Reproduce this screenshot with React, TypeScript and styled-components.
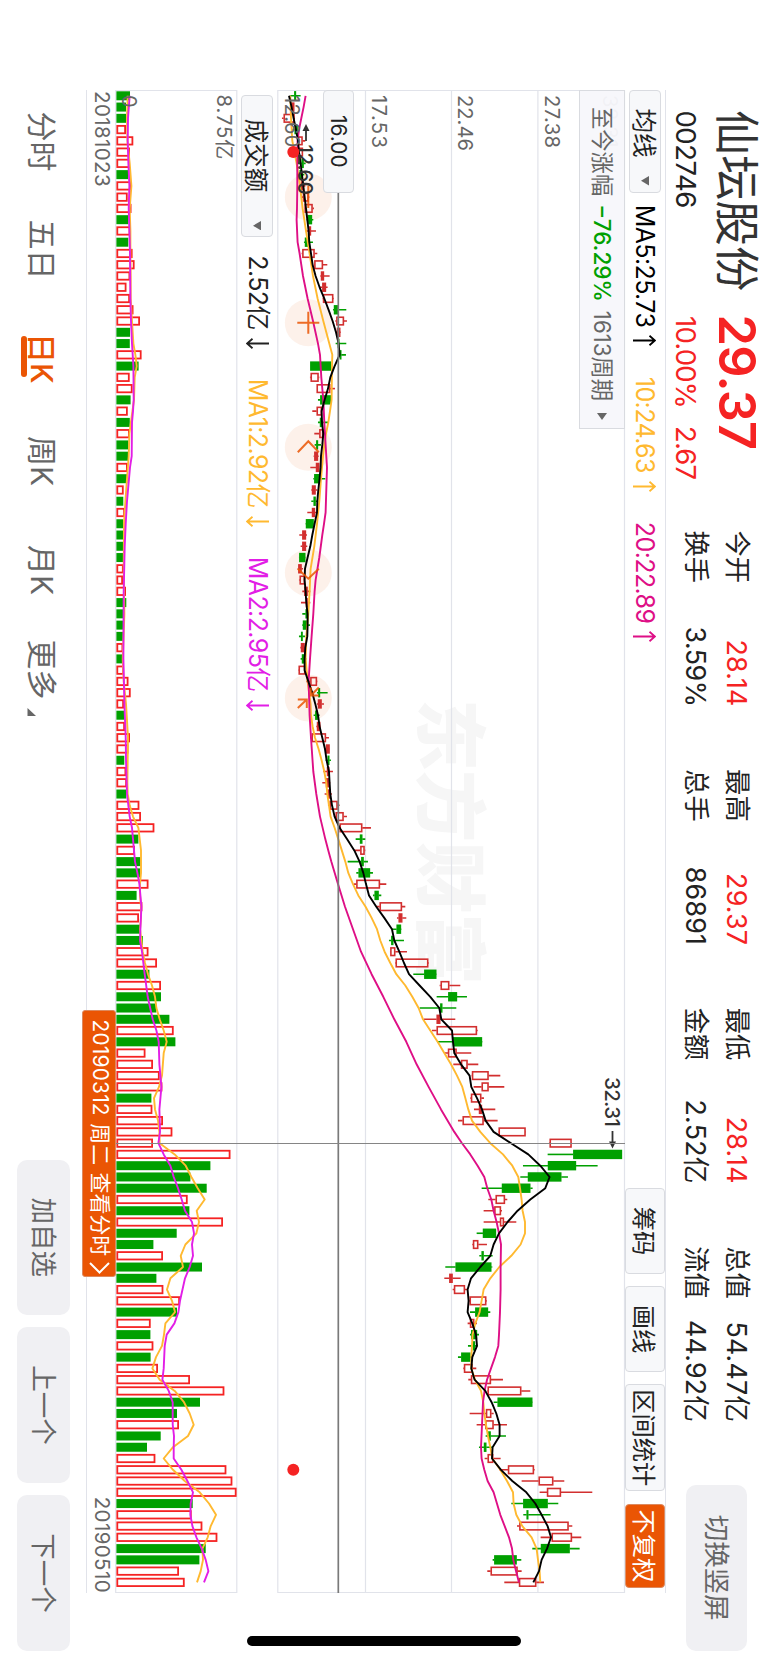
import React from "react";
import styled, { createGlobalStyle, css } from "styled-components";

const RED = "#f52323";
const GREEN = "#00a000";
const ORANGE = "#ea5504";
const YELLOW = "#ffb930";
const PINK = "#de0f86";
const MAGENTA = "#e21ee6";
const GREY = "#666";
const LINE = "#e1e3ea";
const FONT = `Inter, "Noto Sans CJK SC", sans-serif`;

const GlobalStyle = createGlobalStyle`
  html, body { margin: 0; padding: 0; background: #fff; }
  * { box-sizing: border-box; }
`;

/* ---------- data ---------- */

/* Chart levels are stored at three units per pixel. */
const UNIT = 3;
const STEP = 11.262;
const FIRST = 5.8;

type Candle = [string, number, number, number, number];

/* colour, low, body bottom, body top, high */
const candles: Candle[] = [
  ["g", 870, 882, 887, 901], ["r", 872, 872, 882, 882], ["r", 845, 850, 883, 884], ["g", 876, 883, 892, 896],
  ["r", 890, 893, 907, 915], ["r", 882, 884, 908, 908], ["g", 893, 904, 910, 916], ["g", 890, 898, 905, 912],
  ["r", 898, 902, 910, 915], ["r", 905, 908, 925, 927], ["r", 912, 913, 937, 941], ["g", 919, 922, 935, 939],
  ["r", 916, 924, 932, 947], ["g", 911, 914, 925, 938], ["r", 904, 906, 943, 951], ["r", 940, 942, 968, 981],
  ["r", 960, 962, 971, 988], ["r", 958, 966, 977, 982], ["r", 967, 968, 999, 1001], ["g", 998, 1001, 1014, 1038],
  ["r", 1005, 1008, 1031, 1040], ["r", 1007, 1010, 1020, 1022], ["g", 1006, 1014, 1017, 1038], ["g", 1013, 1019, 1023, 1037],
  ["g", 930, 930, 992, 992], ["r", 929, 931, 955, 957], ["r", 949, 949, 990, 1004], ["g", 953, 960, 992, 993],
  ["r", 936, 949, 965, 966], ["g", 953, 959, 965, 983], ["r", 942, 957, 969, 972], ["g", 943, 948, 953, 962],
  ["r", 940, 942, 953, 955], ["r", 930, 947, 957, 958], ["g", 939, 942, 957, 975], ["r", 933, 935, 946, 951],
  ["g", 933, 940, 946, 951], ["r", 921, 935, 944, 950], ["g", 916, 917, 940, 941], ["r", 897, 906, 917, 920],
  ["r", 901, 906, 917, 921], ["g", 896, 897, 915, 916], ["r", 892, 894, 904, 908], ["r", 896, 898, 914, 914],
  ["r", 906, 912, 922, 930], ["r", 902, 917, 922, 930], ["g", 906, 916, 922, 926], ["g", 906, 908, 920, 929],
  ["g", 896, 903, 907, 914], ["r", 900, 902, 913, 915], ["g", 901, 905, 914, 918], ["r", 894, 895, 915, 915],
  ["r", 918, 930, 950, 951], ["g", 950, 954, 959, 982], ["r", 950, 953, 964, 971], ["g", 940, 945, 952, 958],
  ["r", 948, 950, 960, 962], ["r", 930, 934, 977, 986], ["r", 972, 977, 988, 989], ["g", 976, 982, 987, 992],
  ["r", 969, 980, 987, 998], ["r", 966, 977, 988, 990], ["r", 973, 982, 991, 995], ["r", 983, 988, 1012, 1018],
  ["r", 1003, 1006, 1030, 1040], ["r", 1017, 1018, 1086, 1112], ["g", 1066, 1079, 1086, 1095], ["r", 1062, 1080, 1093, 1095],
  ["g", 1042, 1083, 1090, 1103], ["g", 1068, 1075, 1109, 1118], ["r", 1060, 1068, 1139, 1158], ["g", 1118, 1123, 1135, 1143],
  ["r", 1128, 1138, 1205, 1215], ["r", 1190, 1195, 1206, 1218], ["g", 1174, 1189, 1202, 1203], ["g", 1166, 1173, 1179, 1211],
  ["r", 1169, 1170, 1185, 1220], ["r", 1184, 1186, 1284, 1286], ["g", 1239, 1272, 1308, 1309], ["r", 1318, 1321, 1347, 1380],
  ["g", 1309, 1344, 1370, 1400], ["g", 1258, 1320, 1326, 1368], ["r", 1271, 1309, 1320, 1365], ["r", 1295, 1309, 1430, 1432],
  ["g", 1310, 1358, 1445, 1446], ["r", 1334, 1343, 1369, 1413], ["r", 1359, 1382, 1402, 1434], ["r", 1414, 1415, 1465, 1500],
  ["r", 1420, 1444, 1465, 1512], ["r", 1410, 1412, 1443, 1451], ["r", 1421, 1436, 1445, 1485], ["r", 1373, 1387, 1450, 1492],
  ["r", 1494, 1495, 1576, 1577], ["r", 1646, 1648, 1714, 1715], ["g", 1642, 1719, 1865, 1865], ["g", 1568, 1643, 1727, 1792],
  ["g", 1560, 1583, 1683, 1703], ["g", 1444, 1505, 1590, 1597], ["r", 1464, 1486, 1514, 1521], ["r", 1450, 1482, 1502, 1505],
  ["r", 1450, 1499, 1511, 1548], ["g", 1429, 1448, 1487, 1487], ["r", 1416, 1418, 1434, 1460], ["g", 1437, 1444, 1450, 1477],
  ["g", 1335, 1366, 1473, 1476], ["r", 1332, 1347, 1357, 1381], ["r", 1357, 1361, 1394, 1400], ["r", 1405, 1408, 1458, 1460],
  ["g", 1409, 1425, 1463, 1470], ["r", 1402, 1409, 1422, 1430], ["g", 1409, 1413, 1430, 1436], ["g", 1403, 1418, 1424, 1431],
  ["g", 1373, 1383, 1410, 1412], ["r", 1389, 1391, 1417, 1428], ["r", 1404, 1412, 1472, 1508], ["r", 1460, 1462, 1563, 1590],
  ["g", 1480, 1492, 1596, 1597], ["r", 1408, 1457, 1473, 1480], ["r", 1429, 1455, 1480, 1520], ["g", 1456, 1464, 1471, 1517],
  ["g", 1436, 1451, 1458, 1475], ["r", 1453, 1462, 1479, 1501], ["r", 1497, 1523, 1601, 1603], ["r", 1564, 1615, 1659, 1692],
  ["r", 1618, 1640, 1682, 1776], ["g", 1533, 1569, 1642, 1674], ["g", 1569, 1579, 1584, 1651], ["r", 1550, 1557, 1705, 1716],
  ["r", 1621, 1654, 1715, 1743], ["g", 1596, 1622, 1708, 1738], ["g", 1477, 1482, 1549, 1563], ["r", 1461, 1471, 1552, 1564],
  ["r", 1512, 1556, 1608, 1631],
];

const volumeColours =
  "gggrrrrgrrrgrgrrrrrrrggrgrrgrgrggrgrgrggggrrrggggrgrrrrgrrrgrrgrrrgrggrgrrggrrgrgggrgrrrrgrrrrrgggrgrggrggrrgrgrgrrrggrggrrrrgrrrggrr";

const volumes = [
  14, 10, 10, 10, 17.3, 14, 14, 12, 15.5, 11.7, 15.5, 12.3, 14.5, 12.3, 16.6, 18.6, 14.3, 10.5, 14, 17.5, 24, 14, 13.8,
  25.6, 22.6, 13.7, 16.6, 14.6, 11.8, 13.8, 13.8, 12.5, 12.5, 11.8, 11.3, 7.7, 7.3, 9, 7.3, 7, 7.3, 7.3, 7.7, 7, 10,
  10.3, 8.3, 7.7, 7.3, 7.3, 6.7, 8, 12.5, 14.7, 8, 8.3, 9, 14, 12.4, 8.3, 10.3, 11, 10.3, 23.4, 25, 38.4, 22.4, 19,
  24.7, 24.4, 32.5, 20.6, 26.4, 23, 24, 26.8, 32.5, 41, 33.4, 45, 45, 40.4, 53.4, 57.7, 59.4, 29.5, 37, 43.7, 46.4,
  35.4, 36.4, 47, 56.4, 37, 114.5, 94.4, 74.4, 90.7, 71.7, 73.4, 107, 60.7, 37.4, 47, 86, 40.4, 47.4, 64, 61, 34.7,
  34.4, 37.4, 34.6, 42, 74, 108.4, 84, 61, 63, 44.7, 31, 39.4, 110.4, 116.4, 120.6, 76.7, 75.7, 86.4, 101.4, 89.7,
  83.4, 63, 68.7,
];

/* flat list of (bar index, level) pairs */
const ma5 = [
  0, 866, 1, 874, 2, 880, 3, 887, 4, 893, 5, 896, 6, 901, 8, 909, 10, 917, 12, 925, 13, 927, 14, 932, 15, 937, 16, 946,
  17, 958, 18, 972, 19, 985, 20, 997, 21, 1007, 22, 1015, 23, 1018, 24, 1003, 25, 990, 26, 983, 27, 973, 28, 964, 29,
  965, 30, 969, 31, 966, 32, 962, 33, 961, 34, 958, 35, 954, 36, 951, 37, 950, 38, 943, 39, 936, 40, 930, 41, 922, 42,
  914, 43, 913, 44, 916, 45, 918, 46, 922, 47, 922, 48, 921, 49, 915, 50, 913, 51, 913, 52, 924, 53, 936, 54, 945, 55,
  953, 56, 958, 57, 966, 58, 974, 59, 979, 60, 986, 61, 988, 62, 990, 63, 995, 64, 1003, 65, 1018, 66, 1040, 67, 1062,
  68, 1078, 69, 1089, 70, 1097, 71, 1106, 72, 1128, 73, 1152, 74, 1175, 75, 1182, 76, 1197, 77, 1211, 78, 1226, 79,
  1258, 80, 1290, 81, 1317, 82, 1323, 83, 1355, 84, 1358, 85, 1362, 86, 1382, 87, 1408, 88, 1413, 89, 1430, 90, 1445,
  91, 1456, 92, 1480, 93, 1532, 94, 1584, 95, 1620, 96, 1648, 97, 1635, 98, 1590, 99, 1552, 100, 1522, 101, 1496, 102,
  1480, 103, 1470, 104, 1440, 105, 1412, 106, 1402, 107, 1405, 108, 1402, 109, 1416, 110, 1427, 111, 1430, 112, 1416,
  113, 1413, 114, 1423, 115, 1455, 116, 1474, 117, 1488, 118, 1498, 119, 1498, 120, 1477, 121, 1475, 122, 1502, 123,
  1536, 124, 1578, 125, 1605, 126, 1624, 127, 1642, 128, 1652, 129, 1640, 130, 1624, 131, 1616, 132, 1599,
];

const ma10 = [
  0, 870, 2, 872, 4, 876, 6, 889, 8, 899, 10, 907, 12, 917, 14, 928, 16, 938, 18, 952, 20, 969, 22, 987, 23, 996, 24,
  995, 27, 994, 28, 989, 29, 984, 30, 977, 31, 972, 32, 968, 34, 962, 36, 957, 38, 950, 40, 942, 42, 931, 44, 928, 46,
  924, 48, 918, 50, 916, 52, 922, 54, 931, 55, 932, 56, 937, 57, 944, 58, 955, 59, 964, 60, 972, 61, 978, 62, 981, 63,
  986, 64, 991, 65, 1003, 66, 1014, 68, 1035, 69, 1044, 70, 1058, 71, 1074, 72, 1096, 73, 1114, 74, 1130, 75, 1140, 76,
  1153, 77, 1170, 78, 1188, 79, 1215, 80, 1236, 81, 1255, 82, 1268, 83, 1290, 84, 1312, 85, 1332, 86, 1352, 87, 1370,
  88, 1386, 89, 1395, 90, 1404, 91, 1415, 92, 1440, 93, 1470, 94, 1508, 95, 1536, 96, 1554, 97, 1559, 98, 1564, 99,
  1567, 100, 1574, 101, 1574, 102, 1561, 103, 1533, 104, 1497, 105, 1470, 106, 1450, 107, 1444, 108, 1438, 109, 1425,
  110, 1417, 111, 1415, 112, 1413, 113, 1413, 114, 1424, 115, 1442, 116, 1449, 117, 1452, 118, 1457, 119, 1463, 120,
  1470, 121, 1476, 122, 1500, 123, 1520, 124, 1538, 125, 1540, 126, 1548, 127, 1566, 128, 1594, 129, 1609, 130, 1613,
  131, 1618, 132, 1620,
];

const ma20 = [
  0, 916, 1, 910, 2, 903, 3, 896, 4, 892, 6, 891, 8, 891, 10, 890, 11, 889, 13, 892, 14, 898, 16, 908, 18, 922, 20,
  938, 22, 953, 23, 959, 25, 963, 27, 969, 29, 972, 30, 974, 32, 978, 33, 980, 35, 978, 37, 976, 38, 971, 39, 966, 41,
  957, 43, 946, 44, 943, 46, 939, 48, 934, 50, 929, 52, 925, 54, 927, 55, 928, 56, 930, 57, 932, 60, 939, 62, 948, 64,
  959, 66, 975, 67, 984, 68, 993, 70, 1013, 72, 1034, 74, 1058, 76, 1082, 78, 1114, 80, 1149, 82, 1182, 83, 1200, 84,
  1218, 86, 1249, 88, 1285, 90, 1322, 92, 1362, 93, 1385, 94, 1410, 95, 1432, 96, 1452, 97, 1461, 98, 1473, 99, 1480,
  100, 1489, 101, 1496, 102, 1502, 104, 1501, 106, 1501, 108, 1499, 110, 1496, 111, 1494, 112, 1484, 113, 1472, 114,
  1460, 115, 1453, 116, 1448, 118, 1445, 120, 1442, 121, 1444, 122, 1452, 123, 1462, 124, 1480, 126, 1500, 128, 1526,
  129, 1535, 130, 1539, 131, 1547, 132, 1556,
];

const volMa1 = [
  0, 384, 2, 382, 4, 383, 6, 390, 8, 395, 10, 390, 12, 392, 14, 392, 16, 393, 18, 393, 20, 397, 22, 401, 23, 407, 24,
  411, 25, 405, 27, 403, 28, 398, 30, 389, 32, 387, 34, 382, 36, 377, 38, 373, 42, 372, 46, 374, 50, 369, 52, 372, 54,
  379, 55, 381, 57, 385, 59, 384, 61, 383, 62, 384, 63, 390, 64, 400, 65, 416, 66, 420, 67, 424, 69, 424, 70, 421, 71,
  421, 72, 424, 73, 424, 74, 421, 76, 429, 77, 436, 78, 445, 79, 457, 80, 466, 81, 470, 82, 480, 83, 492, 84, 501, 85,
  492, 87, 487, 88, 478, 89, 463, 90, 466, 91, 475, 92, 479, 93, 480, 94, 525, 95, 558, 96, 575, 97, 594, 98, 615, 99,
  591, 100, 598, 101, 590, 102, 557, 103, 543, 104, 550, 105, 512, 106, 502, 107, 517, 108, 526, 109, 497, 110, 493,
  111, 487, 112, 469, 113, 458, 114, 480, 115, 525, 116, 553, 117, 570, 118, 582, 119, 565, 120, 520, 121, 492, 122,
  520, 123, 555, 124, 600, 125, 628, 126, 649, 127, 633, 128, 624, 129, 608, 130, 610, 131, 603, 132, 592,
];

const volMa2 = [
  0, 390, 2, 385, 4, 384, 6, 386, 8, 389, 10, 387, 12, 389, 14, 391, 18, 392, 20, 394, 22, 397, 24, 401, 27, 402, 28,
  400, 29, 397, 32, 396, 33, 391, 34, 388, 36, 382, 38, 378, 40, 375, 44, 372, 50, 371, 54, 374, 57, 378, 59, 379, 61,
  381, 62, 382, 64, 390, 65, 397, 66, 400, 68, 406, 69, 413, 70, 419, 72, 425, 74, 422, 75, 421, 76, 427, 78, 435, 80,
  444, 82, 459, 83, 470, 84, 477, 86, 479, 88, 485, 90, 479, 92, 481, 93, 476, 94, 492, 95, 512, 96, 522, 97, 535, 98,
  546, 99, 556, 100, 577, 101, 583, 102, 577, 103, 580, 104, 570, 105, 556, 107, 541, 108, 536, 109, 524, 110, 501,
  111, 495, 113, 492, 114, 488, 115, 507, 116, 519, 118, 519, 119, 523, 120, 522, 121, 522, 122, 545, 123, 563, 124,
  580, 125, 573, 126, 572, 127, 578, 128, 590, 129, 606, 130, 618, 131, 626, 132, 613,
];

const quotes = [
  { a: "今开", av: "28.14", b: "换手", bv: "3.59%", red: true },
  { a: "最高", av: "29.37", b: "总手", bv: "86891", red: true },
  { a: "最低", av: "28.14", b: "金额", bv: "2.52亿", red: true },
  { a: "总值", av: "54.47亿", b: "流值", bv: "44.92亿", red: false },
];

/* ---------- layout ---------- */

const Screen = styled.div`
  width: 768px;
  height: 1663px;
  overflow: hidden;
  background: #fff;
`;

/* The phone is held sideways: the landscape page is turned a quarter. */
const Landscape = styled.div`
  position: relative;
  width: 1663px;
  height: 768px;
  display: flex;
  flex-direction: column;
  transform-origin: 0 0;
  transform: translateX(768px) rotate(90deg);
  font-family: ${FONT};
  font-size: 25px;
  line-height: 1;
  color: #222;
  white-space: nowrap;
`;

const Header = styled.header`
  display: flex;
  flex: none;
  height: 102px;
  padding: 0 12.3px 0 110px;
`;

const Identity = styled.div`
  display: grid;
  grid-template-columns: 206px auto;
  grid-template-rows: 62px 40.5px;
  align-items: center;
  width: 420.5px;
`;

const StockName = styled.h1`
  margin: 0;
  padding-top: 1px;
  font-size: 45.3px;
  font-weight: 400;
  color: #333;
`;

const LastPrice = styled.span`
  margin-left: -1.5px;
  font-size: 50.5px;
  font-weight: 640;
  letter-spacing: -0.7px;
  color: ${RED};
`;

const Code = styled.span`
  padding-left: 0.5px;
  font-size: 27.5px;
  letter-spacing: -0.5px;
`;

const Change = styled.span`
  display: flex;
  gap: 18px;
  font-size: 27.5px;
  letter-spacing: -0.8px;
  color: ${RED};
`;

const Quotes = styled.dl`
  display: flex;
  gap: 62.6px;
  margin: 10.5px 0 0;
`;

const QuoteColumn = styled.div`
  width: 176px;
`;

const QuoteRow = styled.div`
  display: flex;
  align-items: center;
  justify-content: space-between;
  height: 41px;
`;

const QuoteLabel = styled.dt`
  padding-top: 1px;
  font-size: 26.3px;
`;

const QuoteValue = styled.dd<{ $red?: boolean; $tight?: boolean }>`
  margin: 0;
  font-size: 26.8px;
  letter-spacing: ${(p) => (p.$tight ? -0.5 : 0.2)}px;
  color: ${(p) => (p.$red ? RED : "#222")};
`;

const SoftButton = styled.button<{ $w: number; $h: number }>`
  display: flex;
  align-items: center;
  justify-content: center;
  width: ${(p) => p.$w}px;
  height: ${(p) => p.$h}px;
  padding: 0;
  border: 0;
  border-radius: 10px;
  background: #f0f0f3;
  font-family: ${FONT};
  font-size: 26.5px;
  line-height: 1;
  color: ${GREY};
`;

const SwitchSlot = styled.div`
  margin: 21px 0 0 auto;
`;

const Body = styled.main`
  position: relative;
  width: 1503px;
  margin-left: 90px;
  flex: none;
`;

const MaBar = styled.div`
  display: flex;
  align-items: center;
  height: 41.3px;
  border-top: 1px solid ${LINE};
`;

const VolumeBar = styled.div`
  display: flex;
  align-items: center;
  height: 40.2px;
  padding-left: 5px;
`;

const chip = css`
  display: flex;
  align-items: center;
  border: 1px solid #d9dbe0;
  border-radius: 4px;
  background: #f7f8fa;
`;

const Select = styled.div<{ $w: number }>`
  ${chip}
  justify-content: space-between;
  width: ${(p) => p.$w}px;
  height: 32px;
  padding: 3px 6px 0 ${(p) => (p.$w > 110 ? 22.5 : 17.5)}px;
  font-size: 24.6px;
  svg { margin-top: -3px; }
`;

const Reading = styled.span<{ $c: string; $ml: number }>`
  display: flex;
  align-items: center;
  gap: 8px;
  margin-left: ${(p) => p.$ml}px;
  letter-spacing: -0.6px;
  color: ${(p) => p.$c};
`;

const Tools = styled.div`
  display: flex;
  gap: 12.7px;
  margin-left: auto;
  margin-right: 5px;
`;

const Tool = styled.button<{ $w: number; $on?: boolean }>`
  ${chip}
  justify-content: center;
  width: ${(p) => p.$w}px;
  height: 40px;
  padding: 3px 0 0;
  font-family: ${FONT};
  font-size: 24.3px;
  line-height: 1;
  color: #222;
  ${(p) => p.$on && css`background: ${ORANGE}; border-color: #dd8a5f; color: #fff;`}
`;

const ChartBox = styled.section<{ $h: number }>`
  position: relative;
  height: ${(p) => p.$h}px;
  svg { display: block; overflow: visible; }
`;

const GainPopup = styled.div`
  position: absolute;
  left: 0;
  top: 0;
  display: flex;
  align-items: center;
  width: 338.5px;
  height: 45.4px;
  padding-left: 16px;
  border: 1px solid #d9dbe0;
  background: rgba(247, 247, 251, 0.96);
  font-size: 22.3px;
  color: ${GREY};
`;

const Gain = styled.b`
  margin: 0 9px 0 8px;
  font-size: 22.5px;
  font-weight: 500;
  color: ${GREEN};
`;

const PopupArrow = styled.span`
  margin-left: 12px;
  border: 5.5px solid transparent;
  border-left: 7.5px solid ${GREY};
  border-right: 0;
`;

const PriceTag = styled.div`
  position: absolute;
  left: 0;
  top: 271px;
  ${chip}
  justify-content: center;
  width: 102.7px;
  height: 30.3px;
  font-size: 21px;
`;

const DateAxis = styled.div`
  display: flex;
  justify-content: space-between;
  align-items: center;
  height: 30px;
  padding: 0 0 0 1px;
  border-bottom: 1px solid ${LINE};
  font-size: 20.4px;
  letter-spacing: 0.45px;
  color: ${GREY};
`;

const Crosshair = styled.div`
  position: absolute;
  left: 1052.7px;
  top: 41px;
  width: 1.3px;
  height: 509px;
  background: #858585;
`;

const DateTag = styled.div`
  position: absolute;
  left: 919.5px;
  top: 550px;
  display: flex;
  align-items: center;
  gap: 7.5px;
  width: 267px;
  height: 33.5px;
  padding-left: 9px;
  border: 1px solid #dd8a5f;
  border-radius: 3px;
  background: ${ORANGE};
  font-size: 20.9px;
  color: #fff;
  svg { margin-left: -2px; }
`;

const TagDate = styled.span`
  letter-spacing: 0.2px;
`;

const Footer = styled.footer`
  display: flex;
  align-items: flex-start;
  justify-content: space-between;
  padding: 16.3px 12.3px 0 111.5px;
`;

const Tabs = styled.nav`
  display: grid;
  grid-template-columns: 108px 113.5px 103px 109px 94.5px auto;
  height: 55px;
  align-items: center;
  font-size: 30px;
  color: ${GREY};
`;

const Tab = styled.span<{ $on?: boolean }>`
  position: relative;
  justify-self: start;
  ${(p) => p.$on && css`
    color: ${ORANGE};
    font-weight: 500;
    &::after {
      content: "";
      position: absolute;
      left: 2.5px;
      bottom: -6.7px;
      width: 41px;
      height: 6px;
      border-radius: 3px;
      background: ${ORANGE};
    }
  `}
`;

const More = styled.span`
  display: flex;
  align-items: flex-end;
  gap: 8px;
  svg { margin-bottom: 0; }
`;

const Actions = styled.div`
  display: flex;
  gap: 12.5px;
`;

const HomeIndicator = styled.div`
  position: absolute;
  left: 1636px;
  top: 246.5px;
  width: 10.4px;
  height: 274.7px;
  border-radius: 6px;
  background: #000;
`;

/* ---------- drawings ---------- */

const Arrow = ({ down }: { down?: boolean }) => (
  <svg width="11" height="23" viewBox="0 0 11 23" fill="none" stroke="currentColor" strokeWidth="1.8">
    <path d={down ? "M5.5 0V22M0.8 16.5L5.5 22L10.2 16.5" : "M5.5 23V1M0.8 6.5L5.5 1L10.2 6.5"} />
  </svg>
);

const Caret = () => (
  <svg width="9.4" height="8" viewBox="0 0 9.4 8">
    <path d="M0 0H9.4L4.7 8Z" fill={GREY} />
  </svg>
);

const barX = (i: number) => FIRST + STEP * i;

const toPoints = (flat: number[], top: number) => {
  const out: string[] = [];
  for (let k = 0; k < flat.length; k += 2) {
    out.push(`${barX(flat[k]).toFixed(1)},${(top - flat[k + 1] / UNIT).toFixed(1)}`);
  }
  return out.join(" ");
};

const Line = ({ data, top, color }: { data: number[]; top: number; color: string }) => (
  <polyline points={toPoints(data, top)} fill="none" stroke={color} strokeWidth="1.9" strokeLinejoin="round" />
);

interface LabelProps {
  x: number;
  y: number;
  w: number;
  children: string;
  size?: number;
  fill?: string;
  weight?: number;
}

const Label = ({ x, y, w, children, size = 20.2, fill = GREY, weight = 400 }: LabelProps) => (
  <text x={x} y={y} textLength={w} fontSize={size} fill={fill} fontWeight={weight}>
    {children}
  </text>
);

const PRICE_TOP = 624.7;
const VOLUME_TOP = 237.3;

const GhostButton = ({ x, d }: { x: number; d: string }) => (
  <g transform={`translate(${x} 316.7)`}>
    <path d={d} fill="none" stroke={ORANGE} strokeWidth="2" opacity="0.85" />
  </g>
);

const ghosts = [
  { x: 107, d: "M-11 0H11" },
  { x: 232.7, d: "M-11 0H11M0 -11V11" },
  { x: 357.3, d: "M5 -10.5L-6 0L5 10.5" },
  { x: 482.7, d: "M-4 -10.5L6 0L-4 10.5" },
  { x: 608, d: "M-10.5 -10.5L-2.5 -2.5M-10.5 -2.5H-2.5V-10.5M10 10.5L1.5 1.5M1.5 10.5V1.5H10" },
];

const PriceChart = () => (
  <svg width="1503" height="347.3" fontFamily={FONT}>
    <text x="609" y="201" fontSize="72" fontWeight="900" fill="#f6f6f6" textLength="286">
      东方财富
    </text>
    <path
      d="M0.5 0V347.2M1502.5 0V347.2M0 0.5H1503M0 87.1H1503M0 173.5H1503M0 259.5H1503M0 347.2H1503"
      fill="none"
      stroke={LINE}
      strokeWidth="1.2"
    />
    <Label x={5} y={21.7} w={52.5}>32.31</Label>
    <Label x={5} y={80} w={53}>27.38</Label>
    <Label x={5} y={166.7} w={56}>22.46</Label>
    <Label x={5} y={253} w={53}>17.53</Label>
    {ghosts.map((g) => (
      <circle key={g.x} cx={g.x} cy="316.7" r="23.5" fill="#fdf1ea" />
    ))}
    {candles.map(([c, lo, b0, b1, hi], i) => {
      const x = barX(i);
      const y = (v: number) => PRICE_TOP - v / UNIT;
      const color = c === "r" ? "#d22f2f" : GREEN;
      const hollow = c === "r" && b1 - b0 > 11.5;
      return (
        <g key={i} stroke={color} strokeWidth="1.6">
          <path d={`M${x} ${y(lo)}V${y(b0)}M${x} ${y(b1)}V${y(hi)}`} />
          <rect
            x={x - (hollow ? 3.8 : 3.9)}
            y={y(b1) + 0.6}
            width={hollow ? 7.6 : 7.8}
            height={Math.max((b1 - b0) / UNIT - 1.2, 0.3)}
            fill={hollow ? "none" : color}
          />
        </g>
      );
    })}
    <Line data={ma10} top={PRICE_TOP} color={YELLOW} />
    <Line data={ma20} top={PRICE_TOP} color={PINK} />
    <Line data={ma5} top={PRICE_TOP} color="#000" />
    <Label x={5} y={339.7} w={52.5}>12.60</Label>
    {ghosts.map((g) => (
      <GhostButton key={g.x} x={g.x} d={g.d} />
    ))}
    <path d="M0 286.7H1503" stroke="#7a7a7a" strokeWidth="1.7" />
    <path d="M40 319H51" stroke="#333" strokeWidth="1.8" />
    <path d="M34 319L41 315.5V322.5Z" fill="#333" />
    <Label x={54.5} y={327} w={50.5} fill="#333" size={20.5} weight={500}>12.60</Label>
    <path d="M1041 12.5H1052" stroke="#333" strokeWidth="1.8" />
    <path d="M1058.5 12.5L1051.5 9V16Z" fill="#333" />
    <Label x={987} y={20} w={50} fill="#333" size={20.5} weight={500}>32.31</Label>
    <circle cx="62" cy="331.7" r="6" fill={RED} />
    <circle cx="1379.8" cy="331.7" r="6" fill={RED} />
  </svg>
);

const VolumeChart = () => (
  <svg width="1503" height="121" fontFamily={FONT}>
    <path d="M0.5 0V121M1502.5 0V121M0 0.2H1503M0 121.3H1503" fill="none" stroke={LINE} strokeWidth="1.2" />
    {volumes.map((h, i) => {
      const red = volumeColours[i] === "r";
      return (
        <rect
          key={i}
          x={barX(i) - (red ? 3.7 : 4.5)}
          y={121 - h + (red ? 0.9 : 0)}
          width={red ? 7.4 : 9}
          height={red ? h - 2.2 : h - 0.4}
          fill={red ? "none" : GREEN}
          stroke={red ? RED : "none"}
          strokeWidth="1.8"
        />
      );
    })}
    <Line data={volMa1} top={VOLUME_TOP} color={YELLOW} />
    <Line data={volMa2} top={VOLUME_TOP} color={MAGENTA} />
    <Label x={4.5} y={19.6} w={65}>8.75亿</Label>
    <Label x={5} y={115} w={12}>0</Label>
  </svg>
);

export default function App() {
  return (
    <Screen>
      <GlobalStyle />
      <Landscape>
        <Header>
          <Identity>
            <StockName>仙坛股份</StockName>
            <LastPrice>29.37</LastPrice>
            <Code>002746</Code>
            <Change>
              <span>10.00%</span>
              <span>2.67</span>
            </Change>
          </Identity>
          <Quotes>
            {quotes.map((q) => (
              <QuoteColumn key={q.a}>
                <QuoteRow>
                  <QuoteLabel>{q.a}</QuoteLabel>
                  <QuoteValue $red={q.red}>{q.av}</QuoteValue>
                </QuoteRow>
                <QuoteRow>
                  <QuoteLabel>{q.b}</QuoteLabel>
                  <QuoteValue $tight={q.bv.endsWith("%")}>{q.bv}</QuoteValue>
                </QuoteRow>
              </QuoteColumn>
            ))}
          </Quotes>
          <SwitchSlot>
            <SoftButton $w={165.7} $h={61.3}>切换竖屏</SoftButton>
          </SwitchSlot>
        </Header>

        <Body>
          <MaBar>
            <Select $w={102.7}>
              均线
              <Caret />
            </Select>
            <Reading $c="#000" $ml={12}>MA5:25.73<Arrow /></Reading>
            <Reading $c={YELLOW} $ml={30.5}>10:24.63<Arrow /></Reading>
            <Reading $c={PINK} $ml={30}>20:22.89<Arrow /></Reading>
            <Tools>
              <Tool $w={85.4}>筹码</Tool>
              <Tool $w={85.4}>画线</Tool>
              <Tool $w={106.6}>区间统计</Tool>
              <Tool $w={84.3} $on>不复权</Tool>
            </Tools>
          </MaBar>
          <ChartBox $h={347.3}>
            <PriceChart />
            <GainPopup>
              至今涨幅<Gain>−76.29%</Gain>1613周期
              <PopupArrow />
            </GainPopup>
            <PriceTag>16.00</PriceTag>
          </ChartBox>
          <VolumeBar>
            <Select $w={142.3}>
              成交额
              <Caret />
            </Select>
            <Reading $c="#222" $ml={18}>2.52亿<Arrow down /></Reading>
            <Reading $c={YELLOW} $ml={30}>MA1:2.92亿<Arrow down /></Reading>
            <Reading $c={MAGENTA} $ml={30}>MA2:2.95亿<Arrow down /></Reading>
          </VolumeBar>
          <ChartBox $h={121}>
            <VolumeChart />
          </ChartBox>
          <DateAxis>
            <span>20181023</span>
            <span>20190510</span>
          </DateAxis>
          <Crosshair />
          <DateTag>
            <TagDate>20190312</TagDate>
            <span>周二</span>
            <span>查看分时</span>
            <svg width="12" height="21" viewBox="0 0 12 21" fill="none" stroke="#fff" strokeWidth="2">
              <path d="M1 1L10.5 10.5L1 20" />
            </svg>
          </DateTag>
        </Body>

        <Footer>
          <Tabs>
            <Tab>分时</Tab>
            <Tab>五日</Tab>
            <Tab $on>日K</Tab>
            <Tab>周K</Tab>
            <Tab>月K</Tab>
            <More>
              更多
              <svg width="8" height="8.5" viewBox="0 0 8 8.5">
                <path d="M8 0V8.5H0Z" fill={GREY} />
              </svg>
            </More>
          </Tabs>
          <Actions>
            <SoftButton $w={155.4} $h={53}>加自选</SoftButton>
            <SoftButton $w={155.4} $h={53}>上一个</SoftButton>
            <SoftButton $w={155.4} $h={53}>下一个</SoftButton>
          </Actions>
        </Footer>
        <HomeIndicator />
      </Landscape>
    </Screen>
  );
}
